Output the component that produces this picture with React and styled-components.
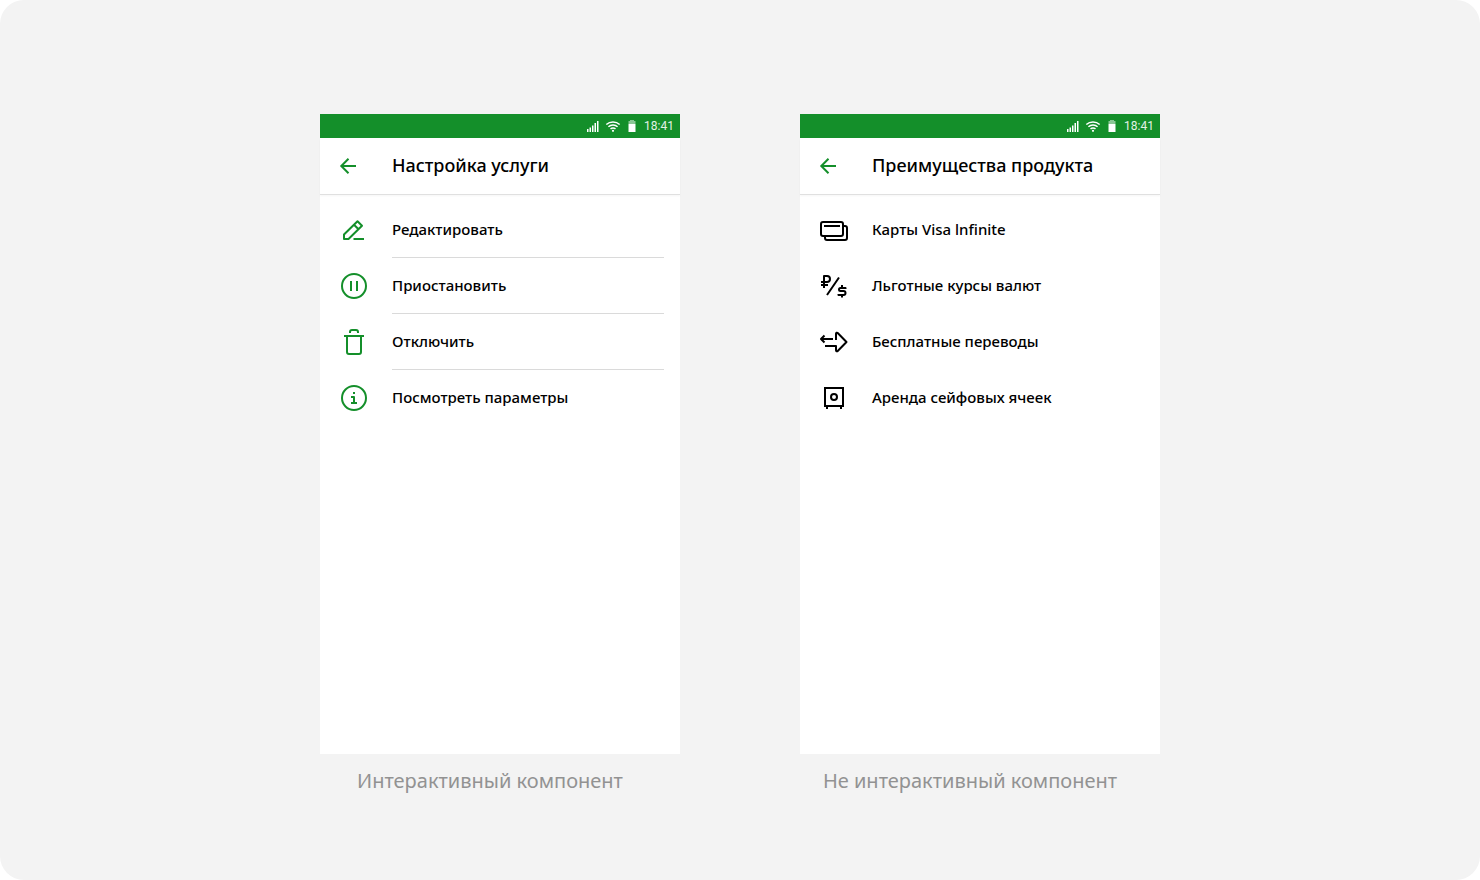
import React from "react";
import styled, { createGlobalStyle } from "styled-components";

const GREEN = "#148f2a";

const GlobalStyle = createGlobalStyle`
  *, *::before, *::after { box-sizing: border-box; }
  body {
    margin: 0;
    background: #fff;
    color: #000;
    font-family: "Noto Sans", "Open Sans", sans-serif;
  }
`;

const Canvas = styled.main`
  display: grid;
  grid-template-columns: repeat(2, minmax(0, 360px));
  justify-content: center;
  align-content: start;
  column-gap: 120px;
  min-height: 100vh;
  padding: 114px 24px 72px;
  border-radius: 24px;
  background: #f3f3f3;
`;

const Figure = styled.figure`
  margin: 0;
`;

const Caption = styled.figcaption`
  padding: 12px 20px 0 0;
  color: #929292;
  font-size: 20px;
  line-height: 30px;
  text-align: center;
  white-space: nowrap;
`;

const Screen = styled.section`
  min-height: 640px;
  background: #fff;
`;

const StatusBar = styled.div`
  display: flex;
  align-items: center;
  justify-content: flex-end;
  height: 24px;
  padding-right: 6px;
  background: ${GREEN};
  color: #fff;
`;

const StatusIcons = styled.svg`
  width: 56px;
  height: 20px;
  margin-right: 4px;
`;

const Clock = styled.time`
  font-family: Roboto, sans-serif;
  font-size: 12px;
  line-height: 24px;
  color: #e3f2e5;
`;

const Header = styled.header`
  display: flex;
  align-items: center;
  height: 56px;
  padding-left: 16px;
  box-shadow: 0 1px 0 #e0e0e0, 0 2px 2px rgba(0, 0, 0, 0.04);
`;

const BackButton = styled.button`
  display: flex;
  width: 24px;
  height: 24px;
  margin-right: 32px;
  padding: 0;
  border: 0;
  background: none;
  color: ${GREEN};
  cursor: pointer;
`;

const Title = styled.h1`
  margin: 0;
  padding-bottom: 2px;
  font-size: 18px;
  font-weight: 500;
  line-height: 24px;
  white-space: nowrap;
`;

const List = styled.ul`
  margin: 0;
  padding: 8px 16px 0;
  list-style: none;
`;

const Item = styled.li`
  display: flex;
`;

const Row = styled.div`
  display: flex;
  flex: 1;
  align-items: center;
  gap: 20px;
  height: 56px;
  padding: 0;
  border: 0;
  background: none;
  color: ${({ $accent }) => ($accent ? GREEN : "#000")};
  font: inherit;
  text-align: left;
  cursor: ${({ $accent }) => ($accent ? "pointer" : "default")};
`;

const Label = styled.span`
  flex: 1;
  height: 56px;
  border-bottom: 1px solid ${({ $divided }) => ($divided ? "#dadada" : "transparent")};
  color: #000;
  font-size: 15px;
  font-weight: 500;
  line-height: 54px;
  white-space: nowrap;
`;

const Glyph = styled.svg`
  flex: none;
  width: 36px;
  height: 36px;
  fill: none;
  stroke: currentColor;
  stroke-width: 2;
  stroke-linejoin: round;
`;

const icons = {
  edit: (
    <>
      <path d="M8 27v-4.500L21.500 9.200 26 13.700 12.500 27zM18 12.700l4.500 4.500" />
      <path d="M17.500 27H28" />
    </>
  ),
  pause: (
    <>
      <circle cx="18" cy="18" r="12" />
      <path d="M15 13v10M21 13v10" />
    </>
  ),
  trash: (
    <path d="M8 12h20M14 9V8a2 2 0 0 1 2-2h4a2 2 0 0 1 2 2v1M11 12v16a2 2 0 0 0 2 2h10a2 2 0 0 0 2-2V12" />
  ),
  info: (
    <>
      <circle cx="18" cy="18" r="12" />
      <path d="M17 13h2M15 17h3v6M15 23h6" />
    </>
  ),
  cards: (
    <>
      <rect x="5" y="10" width="22" height="14" rx="2" />
      <path d="M8 14h16M27 14h2a2 2 0 0 1 2 2v10a2 2 0 0 1-2 2H11a2 2 0 0 1-2-2v-2" />
    </>
  ),
  rates: (
    <>
      <path d="M8 20V8h3a3 3 0 0 1 0 6H5M5 17h7M23 9.500 11 27" />
      <path d="M29.500 21v-1H24.500a1.500 1.500 0 0 0 0 3h3a1.500 1.500 0 0 1 0 4H22.500v-1M26 17v3M26 27v2.500" />
    </>
  ),
  transfer: (
    <path d="M17 15H5M8.500 11.500 5 15l3.500 3.500M9 22h11v4.300a1 1 0 0 0 1.700.7L30.500 18 21.700 9a1 1 0 0 0-1.700.7V16" />
  ),
  safe: (
    <>
      <path d="M9 8h18v18H9zM11 26v3M25 26v3" strokeLinejoin="miter" />
      <circle cx="18" cy="17" r="3" />
    </>
  ),
};

function StatusGlyphs() {
  return (
    <StatusIcons viewBox="0 0 56 20" fill="#fff" aria-hidden="true">
      <path d="M3 13h1.500v3H3zM5.500 11.500H7V16H5.500zM8 9.500h1.500V16H8zM10.500 7H12v9h-1.500zM13 5h1.500v11H13z" />
      <g fill="none" stroke="#fff" strokeWidth="1.500">
        <path d="M22.300 8.500a10 10 0 0 1 13.400 0M24.400 10.700a7 7 0 0 1 9.200 0M26.500 12.900a4 4 0 0 1 5 0" />
      </g>
      <circle cx="29" cy="14.800" r="1.100" />
      <path d="M46 4h4v1h1.500v3h-7V5H46z" opacity="0.5" />
      <path d="M44.500 8h7v8h-7z" />
    </StatusIcons>
  );
}

function Phone({ title, caption, items, interactive }) {
  return (
    <Figure>
      <Screen>
        <StatusBar>
          <StatusGlyphs />
          <Clock>18:41</Clock>
        </StatusBar>
        <Header>
          <BackButton type="button" aria-label="Назад">
            <svg viewBox="0 0 24 24" width="24" height="24" fill="none" stroke="currentColor" strokeWidth="2">
              <path d="M20 12H5.500M12.500 4.800 5.300 12l7.200 7.200" />
            </svg>
          </BackButton>
          <Title>{title}</Title>
        </Header>
        <List>
          {items.map(([icon, label], i) => (
            <Item key={icon}>
              <Row
                as={interactive ? "button" : "div"}
                type={interactive ? "button" : undefined}
                $accent={interactive}
              >
                <Glyph viewBox="0 0 36 36" aria-hidden="true">{icons[icon]}</Glyph>
                <Label $divided={interactive && i < items.length - 1}>{label}</Label>
              </Row>
            </Item>
          ))}
        </List>
      </Screen>
      <Caption>{caption}</Caption>
    </Figure>
  );
}

const actions = [
  ["edit", "Редактировать"],
  ["pause", "Приостановить"],
  ["trash", "Отключить"],
  ["info", "Посмотреть параметры"],
];

const benefits = [
  ["cards", "Карты Visa lnfinite"],
  ["rates", "Льготные курсы валют"],
  ["transfer", "Бесплатные переводы"],
  ["safe", "Аренда сейфовых ячеек"],
];

export default function App() {
  return (
    <>
      <GlobalStyle />
      <Canvas>
        <Phone title="Настройка услуги" caption="Интерактивный компонент" items={actions} interactive />
        <Phone title="Преимущества продукта" caption="Не интерактивный компонент" items={benefits} />
      </Canvas>
    </>
  );
}
